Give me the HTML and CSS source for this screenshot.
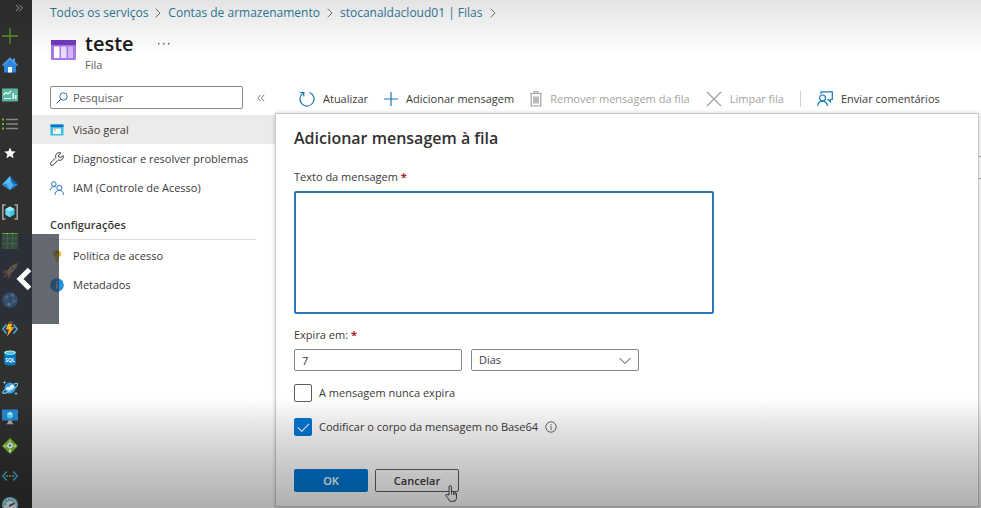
FILE: index.html
```html
<!DOCTYPE html>
<html lang="pt-BR">
<head>
<meta charset="utf-8">
<meta name="viewport" content="width=device-width, initial-scale=1">
<title>teste - Fila</title>
<link rel="stylesheet" href="styles.css">
</head>
<body>
<div class="app">
  <nav class="rail" aria-label="Favoritos">
    <button class="rail-expand" type="button" aria-label="Expandir"><svg viewBox="0 0 8 8" width="8" height="8"><path d="M.8.8 4 4 .8 7.200M4.300.8 7.500 4 4.300 7.200" fill="none" stroke="#b5b5b3" stroke-width=".9"/></svg></button>
    <div class="rail-list">
      <a href="#" aria-label="Criar"><svg viewBox="0 0 16 16"><path d="M8 0v16M0 8h16" stroke="#5c9a25" stroke-width="1.300"/></svg></a>
      <a href="#" aria-label="Início"><svg viewBox="0 0 16 16"><path d="M2 7.500v7.300q0 .7.700.7h10.600q.7 0 .7-.7V7.500L8 2z" fill="#2f86dc"/><path d="M8 .3 0 8l1 .9 7-6.500 7 6.500 1-.9L13 5V1.500h-2v1.700z" fill="#4da2ef"/><path d="M6 10h4v5.500H6z" fill="#eef7ff"/></svg></a>
      <a href="#" aria-label="Painel"><svg viewBox="0 0 16 16"><rect y="1.500" width="16" height="13" rx="1" fill="#5bb5a2"/><path d="M1.500 8 4 5.500 6 7l3-3M2 11.500h7" fill="none" stroke="#e8fbf5" stroke-width="1.200"/><path d="M10.500 6h1.500v6h-1.500zM13 8h1.500v4H13z" fill="#e8fbf5"/></svg></a>
      <a href="#" aria-label="Todos os serviços"><svg viewBox="0 0 16 16"><path d="M4 3.500h12M4 8h12M4 12.500h12" stroke="#858583" stroke-width="1.300"/><path d="M0 2.500h2v2H0zM0 7h2v2H0zM0 11.500h2v2H0z" fill="#73b52f"/></svg></a>
      <a href="#" aria-label="Favoritos"><svg viewBox="0 0 16 16"><path d="m8 2.500 1.600 3.800 4.100.3-3.100 2.700 1 4L8 11.100l-3.600 2.200 1-4-3.100-2.700 4.100-.3z" fill="#fff"/></svg></a>
      <a href="#" aria-label="Data Lake"><svg viewBox="0 0 16 16"><path d="M8 1 0 9.500 8 15z" fill="#57bdf0"/><path d="m8 1 8 8.500L8 15z" fill="#145fae"/><path d="m0 9.500 8-1.700 8 1.700L8 15z" fill="#2f86dc"/><path d="m8 1-3.500 9L8 15l3-5z" fill="#55c9f4" opacity=".65"/></svg></a>
      <a href="#" aria-label="Grupos de recursos"><svg viewBox="0 0 16 16"><path d="M3.500 1H.8v14h2.700M12.500 1h2.700v14h-2.700" fill="none" stroke="#a5a8a8" stroke-width="1.500"/><path d="m8 2.500 4.500 2.600v5.500L8 13.300l-4.500-2.700V5.100z" fill="#40c3e8"/><path d="m8 2.500 4.500 2.600L8 7.800 3.500 5.100z" fill="#9bebfa"/><path d="M3.500 5.100 8 7.800v5.500l-4.500-2.700z" fill="#71d7ef"/></svg></a>
      <a href="#" aria-label="Todos os recursos"><svg viewBox="0 0 16 16"><path d="M0 0h16v16H0z" fill="#4c9b3c"/><path d="M0 5.300h16M0 10.600h16M5.300 0v16M10.600 0v16" stroke="#b5dc98" stroke-width=".8"/></svg></a>
      <a href="#" aria-label="Início rápido"><svg viewBox="0 0 16 16"><path d="m6 7-4 .5L0 11l4-1 2 2-1 4 3.500-2 1-4z" fill="#e8643a"/><path d="M4.500 10.500Q7 2 16 0 14 8 6 12z" fill="#ffb868"/><circle cx="10.500" cy="5.500" r="1.500" fill="#5c9ed7"/><path d="m4 11-3 4 4-2.500z" fill="#ffc33e"/></svg></a>
      <a href="#" aria-label="Serviços de aplicativos"><svg viewBox="0 0 16 16"><circle cx="8" cy="8" r="7.800" fill="#3b9cf0"/><path d="m4.500 5 6-2 1.500 6-4 4-5-4z" fill="none" stroke="#9ed4f4" stroke-width=".8"/><circle cx="4.500" cy="5" r="1.700" fill="#c1e7fb"/><circle cx="10.500" cy="3" r="1.400" fill="#fff"/><circle cx="12" cy="9" r="1.600" fill="#bbe4fb"/><circle cx="7" cy="12.500" r="1.800" fill="#fff"/></svg></a>
      <a href="#" aria-label="Aplicativo de funções"><svg viewBox="0 0 16 16"><path d="M4.500 3.500.8 8l3.700 4.500M11.500 3.500 15.200 8l-3.700 4.500" fill="none" stroke="#46a9df" stroke-width="1.700"/><path d="M7 .5h4.500L9 6h3.500L5 15.500l2-7H3.800z" fill="#fbb62c"/><path d="M9 6h3.500L5 15.500 9.500 8z" fill="#ee862b"/></svg></a>
      <a href="#" aria-label="Banco de dados SQL"><svg viewBox="0 0 16 16"><path d="M2.200 2.500v10.800c0 3 11.600 3 11.600 0V2.500z" fill="#087bc5"/><ellipse cx="8" cy="2.600" rx="5.800" ry="2.200" fill="#c1edf5"/><ellipse cx="8" cy="2.800" rx="4.200" ry="1.200" fill="#4bc2dc"/><text x="8" y="11.500" text-anchor="middle" class="sql">SQL</text></svg></a>
      <a href="#" aria-label="Azure Cosmos DB"><svg viewBox="0 0 16 16"><circle cx="8" cy="8" r="5.500" fill="#369be8"/><path d="M3.500 9q2-3.500 4-1.800Q8 4 11 4.500L12.500 7l-3 3-3 1z" fill="#e1f4ff"/><path d="M3 9.500C-1 13 .7 14 4 12.800 8 11.500 17 6 15.500 3.800 15 3 13.500 3.300 12 4" fill="none" stroke="#63c9ed" stroke-width="1.300"/><path d="M2.500.5 3 2l1.500.5L3 3l-.5 1.500L2 3 .5 2.500 2 2zM14 11.500l.5 1.500 1.500.5-1.500.5-.5 1.500-.5-1.500-1.500-.5 1.500-.5z" fill="#65dae6"/></svg></a>
      <a href="#" aria-label="Máquinas virtuais"><svg viewBox="0 0 16 16"><path d="M0 .5h16v11H0z" fill="#2888d9"/><path d="M6 11.500h4v2l2 1.800H4l2-1.800z" fill="#a7a9aa"/><path d="m8 3 3 1.600V8L8 9.700 5 8V4.600z" fill="#55d6ee"/><path d="m8 3 3 1.600-3 1.700-3-1.700z" fill="#b5f5ff"/></svg></a>
      <a href="#" aria-label="Balanceadores de carga"><svg viewBox="0 0 16 16"><path d="m8 0 8 8-8 8-8-8z" fill="#75b72b"/><path d="M8 2v3M2 8h4M10 8h4M8 10v4M3.500 6.500 2 8l1.500 1.500M12.500 6.500 14 8l-1.500 1.500" fill="none" stroke="#c9eda0"/><circle cx="8" cy="7.500" r="2.800" fill="#f1faff"/><circle cx="8" cy="7.500" r="1.200" fill="#3980bb"/><circle cx="8" cy="13" r="1.200" fill="#f1faff"/></svg></a>
      <a href="#" aria-label="Redes virtuais"><svg viewBox="0 0 16 16"><path d="M4.800 3.500.8 8l4 4.500M11.200 3.500l4 4.500-4 4.500" fill="none" stroke="#3da4dc" stroke-width="1.600"/><circle cx="5" cy="8" r="1" fill="#7dbb37"/><circle cx="8" cy="8" r="1" fill="#7dbb37"/><circle cx="11" cy="8" r="1" fill="#7dbb37"/></svg></a>
      <a href="#" aria-label="Monitor"><svg viewBox="0 0 16 16"><circle cx="8" cy="8" r="8" fill="#8cc6dc"/><circle cx="8" cy="8" r="6.300" fill="#e6f2f6"/><path d="M3 8a5 5 0 0 1 10 0" fill="none" stroke="#3a8fb9" stroke-width="1.500" stroke-dasharray="2 1"/><path d="m7 9 5-2.500" stroke="#37474f" stroke-width="1.500"/></svg></a>
    </div>
  </nav>

  <div class="page">
    <nav class="crumbs" aria-label="Trilha">
      <a href="#">Todos os serviços</a><svg viewBox="0 0 6 10"><path d="m.7.7 4.300 4.300L.7 9.300"/></svg>
      <a href="#">Contas de armazenamento</a><svg viewBox="0 0 6 10"><path d="m.7.7 4.300 4.300L.7 9.300"/></svg>
      <a href="#">stocanaldacloud01 | Filas</a><svg viewBox="0 0 6 10"><path d="m.7.7 4.300 4.300L.7 9.300"/></svg>
    </nav>

    <header class="heading">
      <svg class="queue-icon" viewBox="0 0 25 20"><rect width="25" height="20" rx="1" fill="#a678e4"/><path d="M0 0h25v5H0z" fill="#7338bf"/><path d="M3 6.500h5.500v11.500H3z" fill="#fff"/><path d="M10 6.500h5.500v11.500H10z" fill="#eadcfb"/><path d="M17 6.500h5v11.500h-5z" fill="#d3b6f7"/></svg>
      <div>
        <div class="title-row"><h1>teste</h1><button class="more" type="button" aria-label="Mais"><svg viewBox="0 0 12 2"><path d="M0 0h1.500v1.500H0zM5 0h1.500v1.500H5zM10 0h1.500v1.500H10z" fill="#666"/></svg></button></div>
        <p>Fila</p>
      </div>
    </header>

    <div class="columns">
      <aside class="side">
        <div class="search-row">
          <label class="search">
            <svg viewBox="0 0 12 12"><circle cx="7.500" cy="4.500" r="3.700"/><path d="M4.800 7.200.6 11.400"/></svg>
            <input type="text" placeholder="Pesquisar" aria-label="Pesquisar">
          </label>
          <button class="collapse" type="button" aria-label="Recolher"><svg viewBox="0 0 8 8"><path d="M3.700.8.8 4l2.900 3.200M7.200.8 4.300 4l2.900 3.200" fill="none" stroke="#777"/></svg></button>
        </div>
        <a class="item selected" href="#"><svg viewBox="0 0 14 14"><path d="M.5 1.500h13v11H.5z" fill="#38bde6"/><path d="M.5 1.500h13V4H.5z" fill="#0876c0"/><path d="M3 5.500h8V11H3z" fill="#f3fdff"/><path d="M4 6h2v2H4z" fill="#f2ca68"/></svg>Visão geral</a>
        <a class="item" href="#"><svg viewBox="0 0 14 14"><path d="M9 .8a3.500 3.500 0 0 0-3.200 4.800L.9 10.500a1.500 1.500 0 0 0 2.400 2.400l5-4.900a3.600 3.600 0 0 0 4.900-4.500L11 5.500 8.800 5 8.500 3l2.400-2Q10 .6 9 .8z" fill="none" stroke="#3c3c3c"/></svg>Diagnosticar e resolver problemas</a>
        <a class="item" href="#"><svg viewBox="0 0 14 14" fill="none" stroke="#2b78c5"><circle cx="3.800" cy="3" r="2.300"/><circle cx="9.300" cy="6.800" r="2.500"/><path d="M.5 9Q.6 5.500 3.800 5.400q1.200 0 2 .6M5 13.800q.2-4.300 4.300-4.400 4.100.1 4.300 4.400"/></svg>IAM (Controle de Acesso)</a>
        <h2>Configurações</h2>
        <a class="item" href="#"><svg viewBox="0 0 14 14"><path d="M7 .3 11 3v3.500L8.500 8.700V12L7 13.700 5.500 12V8.700L3 6.500V3z" fill="#f3bd28"/><circle cx="7" cy="3.500" r="1.100" fill="#8e6611"/></svg>Política de acesso</a>
        <a class="item" href="#"><svg viewBox="0 0 14 14"><circle cx="7" cy="7" r="6.800" fill="#2095de"/><path d="M6.200 3h1.600v1.700H6.200zM6.200 5.800h1.600v5H6.200z" fill="#fff"/></svg>Metadados</a>
      </aside>

      <main class="content">
        <div class="toolbar">
          <button type="button"><svg class="icon" viewBox="0 0 16 16"><path d="M10.500 1.500a7 7 0 1 1-6.500.8M.8 1.500h4v4"/></svg>Atualizar</button>
          <button type="button"><svg class="icon plus" viewBox="0 0 14 14"><path d="M7 0v14M0 7h14"/></svg>Adicionar mensagem</button>
          <button type="button" disabled><svg class="icon trash" viewBox="0 0 12 16"><path d="M0 2.500h12M4 2.500v-2h4v2M1.200 3v12h9.600V3"/><path d="M4 5.500v7M6 5.500v7M8 5.500v7" stroke-width="1.500"/></svg>Remover mensagem da fila</button>
          <button type="button" disabled><svg class="icon" viewBox="0 0 16 16"><path d="m1 1 14 14M15 1 1 15"/></svg>Limpar fila</button>
          <span class="divider"></span>
          <button type="button"><svg class="icon" viewBox="0 0 16 16"><circle cx="5.500" cy="7" r="3"/><path d="M.7 15q.4-4.800 4.800-4.900 4.500.1 4.900 4.900M4 3V.8h11.300v7.700h-2v2.200L11 8.500h-1"/></svg>Enviar comentários</button>
        </div>

        <div class="backdrop">
          <form class="panel">
            <h2>Adicionar mensagem à fila</h2>
            <label class="label" for="text">Texto da mensagem <b>*</b></label>
            <textarea id="text"></textarea>
            <label class="label" for="expires">Expira em: <b>*</b></label>
            <div class="expiry">
              <input id="expires" type="text" value="7">
              <div class="select"><select aria-label="Unidade"><option>Dias</option></select><svg viewBox="0 0 12 8"><path d="m.5 1 5.500 5.500L11.500 1" fill="none" stroke="#444"/></svg></div>
            </div>
            <div class="check"><input id="never" type="checkbox"><label for="never">A mensagem nunca expira</label></div>
            <div class="check"><input id="encode" type="checkbox" checked><label for="encode">Codificar o corpo da mensagem no Base64</label><svg class="info" viewBox="0 0 12 12"><circle cx="6" cy="6" r="5.200" fill="none" stroke="#666"/><path d="M6 3v1.200M6 5v4" stroke="#666"/></svg></div>
            <div class="actions"><button class="ok" type="button">OK</button><button class="cancel" type="button">Cancelar<svg class="pointer" viewBox="0 0 12 17"><path d="M4 10V2q0-1.300 1.200-1.300T6.400 2v4.500q1.700-.7 2 .6 1.500-.4 1.700.8 1.400-.2 1.400 1v3.600q0 2-1.500 3.700H4.800Q3.500 13.500.8 10.800q-.5-1.300.8-1.300z" fill="#fff" stroke="#333" stroke-width=".9"/><path d="M6.400 6.500v3M8.400 7.100V10M10.100 8v2.200" stroke="#333" stroke-width=".8"/></svg></button></div>
          </form>
        </div>
      </main>
    </div>
  </div>
  <div class="shade"></div>
  <button class="previous" type="button" aria-label="Anterior"><svg viewBox="0 0 16 24"><path d="M13.500 2.500 4 12l9.500 9.500" fill="none" stroke="#fff" stroke-width="5"/></svg></button>
</div>
</body>
</html>
```

FILE: styles.css
```css
* { box-sizing: border-box; }

body {
  margin: 0;
  overflow: hidden;
  background: #fff;
  color: #3b3a39;
  font: 11px/16px "Open Sans", "Noto Sans", sans-serif;
}

button, input, select, textarea { font: inherit; color: inherit; }
button { padding: 0; border: 0; background: none; }
a { color: inherit; text-decoration: none; }
h1, h2, p { margin: 0; }
svg { display: block; flex: none; }

.app { position: relative; display: flex; height: 100vh; overflow: hidden; }

.rail {
  display: flex;
  flex: none;
  flex-direction: column;
  width: 32px;
  padding-top: 4px;
  background: #30302e;
}
.rail-expand { align-self: flex-end; height: 8px; margin-right: 9px; }
.rail-list {
  display: flex;
  flex: 1;
  flex-direction: column;
  justify-content: space-between;
  margin: 16px 0 -5px 2px;
}
.rail-list svg { width: 16px; height: 16px; }
.sql { fill: #fff; font-size: 5px; font-weight: 700; }

.page { display: flex; flex: 1; flex-direction: column; min-width: 0; }

.crumbs {
  display: flex;
  align-items: center;
  gap: 7px;
  padding: 5px 0 0 18px;
  color: #2e7d9f;
  font-size: 12px;
  white-space: nowrap;
}
.crumbs svg { width: 6px; height: 10px; fill: none; stroke: #777; }

.heading { display: flex; gap: 9px; padding: 10px 0 0 19px; }
.queue-icon { width: 25px; height: 20px; margin-top: 9px; }
.title-row { display: flex; align-items: center; gap: 24px; }
.heading h1 { color: #1b1a19; font-size: 20px; line-height: 26px; font-weight: 600; }
.more svg { width: 12px; height: 2px; }
.heading p { color: #605e5c; }

.columns { display: flex; flex: 1; min-height: 0; margin-top: 13px; }

.side { flex: none; width: 243px; }
.search-row { display: flex; align-items: center; gap: 14px; margin-bottom: 6px; padding-left: 18px; }
.search {
  display: flex;
  align-items: center;
  gap: 5px;
  width: 193px;
  height: 23px;
  padding-left: 5px;
  border: 1px solid #8a8886;
  border-radius: 2px;
}
.search svg { width: 12px; height: 12px; fill: none; stroke: #2878a8; }
.search input { width: 100%; padding: 0; border: 0; outline: 0; background: none; }
.search input::placeholder { color: #605e5c; opacity: 1; }
.collapse svg { width: 8px; height: 8px; }

.item { display: flex; align-items: center; gap: 9px; height: 29px; padding-left: 18px; white-space: nowrap; }
.item svg { width: 14px; height: 14px; }
.selected { background: #edebe9; }
.side h2 {
  margin: 15px 19px 1px 18px;
  padding-bottom: 6px;
  border-bottom: 1px solid #dedddc;
  font-size: 11px;
  font-weight: 600;
}

.content { display: flex; flex: 1; flex-direction: column; min-width: 0; }
.toolbar { display: flex; align-items: center; gap: 16px; height: 29px; margin-top: -2px; padding-left: 24px; white-space: nowrap; }
.toolbar button { display: flex; align-items: center; gap: 8px; }
.toolbar button:disabled { color: #a5a3a1; }
.icon { width: 16px; height: 16px; fill: none; stroke: #1778b4; stroke-width: 1.2; }
.plus { width: 14px; height: 14px; }
.trash { width: 12px; }
:disabled .icon { stroke: #a0a0a0; }
.divider { width: 1px; height: 16px; background: #d2d0ce; }

.backdrop {
  display: flex;
  flex: 1;
  padding: 0 2px 1px 0;
  background: linear-gradient(#999 0 0) right 43px / 100% 1px no-repeat,
    linear-gradient(#999 0 0) right 65px / 100% 1px no-repeat #fff;
}
.panel {
  flex: 1;
  padding: 13px 18px;
  border: 1px solid #c8c8c8;
  background: #fff;
  box-shadow: 0 0 4px #0003;
}
.panel h2 { margin-bottom: 20px; color: #323130; font-size: 16px; line-height: 22px; font-weight: 600; }
.label { display: block; margin-bottom: 6px; }
.label b { color: #a4262c; }
.panel textarea {
  display: block;
  width: 420px;
  max-width: 100%;
  height: 123px;
  margin-bottom: 13px;
  padding: 6px;
  border: 2px solid #2a78ac;
  border-radius: 2px;
  outline: 0;
  resize: none;
}
.expiry { display: flex; gap: 9px; margin-bottom: 13px; }
.expiry input, .select { width: 168px; height: 22px; }
.expiry input, .expiry select {
  padding: 0 7px;
  border: 1px solid #8a8886;
  border-radius: 2px;
  background: #fff;
}
.select { position: relative; }
.expiry select { width: 100%; height: 100%; appearance: none; }
.select svg { position: absolute; top: 8px; right: 8px; width: 12px; height: 8px; pointer-events: none; }

.check { display: flex; align-items: center; gap: 7px; height: 18px; margin-bottom: 16px; }
.check input {
  width: 18px;
  height: 18px;
  margin: 0;
  border: 1px solid #605e5c;
  border-radius: 2px;
  background: #fff;
  appearance: none;
}
.check input:checked { display: grid; place-items: center; border-color: #0078d4; background: #0078d4; }
.check input:checked::before {
  width: 10px;
  height: 5px;
  border: solid #fff;
  border-width: 0 0 1px 1px;
  content: "";
  transform: translateY(-1px) rotate(-45deg);
}
.info { width: 12px; height: 12px; }

.actions { display: flex; gap: 7px; margin-top: 33px; }
.actions button { height: 23px; border-radius: 2px; font-weight: 600; }
.actions .ok { width: 74px; background: #0078d4; color: #fff; }
.actions .cancel { position: relative; width: 84px; border: 1px solid #605e5c; }
.pointer { position: absolute; right: 1px; bottom: -11px; width: 12px; height: 17px; }

.shade {
  position: absolute;
  inset: 0;
  background: linear-gradient(#0000001c, #0000 55px),
    linear-gradient(to top, #00000050, #00000038 40px, #0000001c 80px, #0000 110px);
  pointer-events: none;
}
.previous {
  position: absolute;
  top: 234px;
  left: 0;
  display: flex;
  align-items: center;
  width: 59px;
  height: 90px;
  padding-left: 16px;
  background: #292f3cb8;
}
.previous svg { width: 16px; height: 24px; }
```
